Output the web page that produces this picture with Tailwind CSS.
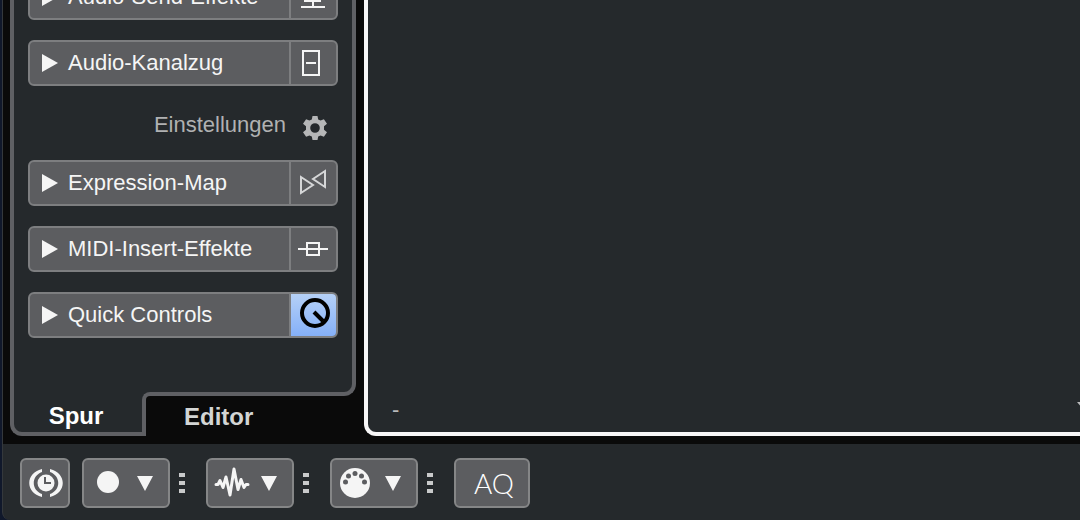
<!DOCTYPE html>
<html lang="de">
<head>
    <meta charset="UTF-8">
    <meta name="viewport" content="width=device-width, initial-scale=1.0">
    <title>Inspector</title>
    <script src="https://cdn.jsdelivr.net/npm/@tailwindcss/browser@4"></script>
</head>
<body class="h-screen overflow-hidden bg-[#10182b] pl-[2px] font-['Liberation_Sans',Arial,sans-serif] text-[#f5f5f5]">
    <div class="h-full flex flex-col overflow-hidden rounded-bl-lg border-l border-[#34383c] bg-[#25292c]">
        <main class="flex-1 min-h-0 flex gap-2 pl-[7px] pb-2 bg-[#0a0a0a]">
            <!-- Inspector -->
            <aside class="w-[346px] shrink-0 flex flex-col">
                <div class="flex-1 min-h-0 overflow-hidden flex flex-col justify-end gap-5 px-[14px] pb-[54px] bg-[#25292c] border-x-4 border-b-4 border-[#5f6064] rounded-br-xl">
                    <section class="shrink-0 h-[46px] flex overflow-hidden rounded-md border-2 border-[#7d7e80] bg-[#5c5d60]">
                        <button class="flex-1 flex items-center gap-[10px] pl-3 text-left text-[22px] leading-6">
                            <svg class="w-4 h-[18px]" viewBox="0 0 16 18" fill="currentColor"><path d="M0 0L16 9L0 18Z"/></svg>
                            Audio-Send-Effekte
                        </button>
                        <button class="w-[47px] flex items-center justify-center pr-[2px] border-l-2 border-[#7d7e80]" aria-label="Audio-Sends">
                            <svg class="w-[30px] h-[30px]" viewBox="0 0 30 30" fill="none" stroke="currentColor" stroke-width="2"><path d="M7 8H22V19H7ZM15 19V25M3 25H27"/></svg>
                        </button>
                    </section>
                    <section class="shrink-0 h-[46px] flex overflow-hidden rounded-md border-2 border-[#7d7e80] bg-[#5c5d60]">
                        <button class="flex-1 flex items-center gap-[10px] pl-3 text-left text-[22px] leading-6">
                            <svg class="w-4 h-[18px]" viewBox="0 0 16 18" fill="currentColor"><path d="M0 0L16 9L0 18Z"/></svg>
                            Audio-Kanalzug
                        </button>
                        <button class="w-[47px] flex items-center justify-center pr-[2px] border-l-2 border-[#7d7e80]" aria-label="Kanalzug">
                            <svg class="w-[30px] h-[30px]" viewBox="0 0 30 30" fill="none" stroke="currentColor" stroke-width="2"><path d="M5 3H21V27H5ZM8 15H18"/></svg>
                        </button>
                    </section>
                    <div class="shrink-0 h-[34px] flex items-center justify-end gap-4 pr-[10px] text-[22px] leading-6 text-[#b0b1b2]">
                        <span id="settings" class="pt-1">Einstellungen</span>
                        <button class="pt-[10px]" aria-labelledby="settings">
                            <svg class="w-[26px] h-[26px]" viewBox="-13 -13 26 26" fill="#b5b6b7"><path fill-rule="evenodd" d="M-2.5 -12H2.5L3.2 -8.6L5.6 -7.4L8.9 -8.7L12 -4.2L9 -1.8V1.8L12 4.2L8.9 8.7L5.6 7.4L3.2 8.6L2.5 12H-2.5L-3.2 8.6L-5.6 7.4L-8.9 8.7L-12 4.2L-9 1.8V-1.8L-12 -4.2L-8.9 -8.7L-5.6 -7.4L-3.2 -8.6ZM0 -4.8A4.8 4.8 0 1 0 0 4.8A4.8 4.8 0 1 0 0 -4.8Z"/></svg>
                        </button>
                    </div>
                    <section class="shrink-0 h-[46px] flex overflow-hidden rounded-md border-2 border-[#7d7e80] bg-[#5c5d60]">
                        <button class="flex-1 flex items-center gap-[10px] pl-3 text-left text-[22px] leading-6">
                            <svg class="w-4 h-[18px]" viewBox="0 0 16 18" fill="currentColor"><path d="M0 0L16 9L0 18Z"/></svg>
                            Expression-Map
                        </button>
                        <button class="w-[47px] flex items-center justify-center pr-[2px] border-l-2 border-[#7d7e80]" aria-label="Expression-Map öffnen">
                            <svg class="w-[30px] h-[30px]" viewBox="0 0 30 30" fill="none" stroke="#d5d6d7" stroke-width="2"><path d="M3 9V25L15 17ZM27 3V19L15 11Z"/></svg>
                        </button>
                    </section>
                    <section class="shrink-0 h-[46px] flex overflow-hidden rounded-md border-2 border-[#7d7e80] bg-[#5c5d60]">
                        <button class="flex-1 flex items-center gap-[10px] pl-3 text-left text-[22px] leading-6">
                            <svg class="w-4 h-[18px]" viewBox="0 0 16 18" fill="currentColor"><path d="M0 0L16 9L0 18Z"/></svg>
                            MIDI-Insert-Effekte
                        </button>
                        <button class="w-[47px] flex items-center justify-center pr-[2px] border-l-2 border-[#7d7e80]" aria-label="MIDI-Inserts">
                            <svg class="w-[30px] h-[30px]" viewBox="0 0 30 30" fill="none" stroke="currentColor" stroke-width="2"><path d="M9 9H21V21H9ZM0 15H30"/></svg>
                        </button>
                    </section>
                    <section class="shrink-0 h-[46px] flex overflow-hidden rounded-md border-2 border-[#7d7e80] bg-[#5c5d60]">
                        <button class="flex-1 flex items-center gap-[10px] pl-3 text-left text-[22px] leading-6">
                            <svg class="w-4 h-[18px]" viewBox="0 0 16 18" fill="currentColor"><path d="M0 0L16 9L0 18Z"/></svg>
                            Quick Controls
                        </button>
                        <button class="w-[47px] flex items-center justify-center border-l-2 border-[#7d7e80] bg-linear-to-b from-[#b5d0f6] to-[#85b0f8] text-black" aria-label="Quick Controls öffnen">
                            <svg class="w-[34px] h-[34px]" viewBox="-2 -2 34 34" fill="none" stroke="currentColor" stroke-width="4"><circle cx="16" cy="13" r="13"/><path d="M15 12L24 21"/></svg>
                        </button>
                    </section>
                </div>
                <nav class="relative -mt-1 h-11 shrink-0 flex text-2xl leading-6 font-bold">
                    <button class="w-[132px] pt-2 pr-1 bg-[#25292c] border-l-4 border-b-4 border-[#5f6064] rounded-bl-xl text-white">Spur</button>
                    <button class="w-[180px] bg-[#25292c] text-[#d3d5d4]">
                        <span class="flex items-center h-full pl-[38px] pt-[2px] border-t-4 border-l-4 border-[#5f6064] rounded-tl-lg bg-[#0a0a0a]">Editor</span>
                    </button>
                </nav>
            </aside>

            <!-- Empty editor area -->
            <section class="flex-1 min-w-0 overflow-hidden flex items-end justify-between pl-6 pb-[10px] border-l-4 border-b-4 border-[#f7f6f7] rounded-bl-xl bg-[#25292c] text-[22px] leading-6 text-[#b9babb]">
                <span>-</span>
                <svg class="w-3 h-6 -mr-[9px]" viewBox="0 0 12 24" fill="currentColor"><path d="M0 4H12L6 11Z"/></svg>
            </section>
        </main>

        <!-- Toolbar -->
        <footer class="flex items-center gap-3 pl-[17px] pt-[14px] pb-3">
            <button class="w-[50px] h-[50px] flex items-center justify-center rounded-md border-2 border-[#858687] bg-[#5c5d60]" aria-label="Retrospektive Aufnahme">
                <svg class="w-9 h-[30px] shrink-0" viewBox="0 0 36 30" fill="none">
                    <circle cx="19" cy="15" r="8.5" fill="#f5f5f5"/>
                    <path d="M18 9V15H24" stroke="#5c5d60" stroke-width="2"/>
                    <path d="M15 1C-2 5 -2 25 15 29V26C4 22 4 8 15 4ZM23 1C40 5 40 25 23 29V26C34 22 34 8 23 4Z" fill="#f5f5f5"/>
                </svg>
            </button>
            <button class="w-[88px] h-[50px] flex items-center justify-between pl-[13px] pr-[15px] rounded-md border-2 border-[#858687] bg-[#5c5d60]" aria-label="Aufnahme">
                <svg class="w-[22px] h-[22px] -mt-[2px]" viewBox="0 0 22 22" fill="currentColor"><circle cx="11" cy="11" r="11"/></svg>
                <svg class="w-4 h-[15px]" viewBox="0 0 16 15" fill="currentColor"><path d="M0 0H16L8 15Z"/></svg>
            </button>
            <svg class="w-6 h-5 -mx-[6px]" viewBox="0 0 24 20" fill="#c9cacb"><path d="M3 0H9V4H3ZM3 8H9V12H3ZM3 16H9V20H3Z"/></svg>
            <button class="w-[88px] h-[50px] flex items-center justify-between pl-[6px] pr-[15px] rounded-md border-2 border-[#858687] bg-[#5c5d60]" aria-label="Audio">
                <svg class="w-9 h-8" viewBox="0 0 36 32" fill="none" stroke="currentColor" stroke-width="3" stroke-linejoin="round" stroke-linecap="round"><path d="M2 17.5H4L6 13.5L9 20.500L12 10L16 28L20 2L24 22.500L27 12.500L30 20.500L32 17.500H34"/></svg>
                <svg class="w-4 h-[15px]" viewBox="0 0 16 15" fill="currentColor"><path d="M0 0H16L8 15Z"/></svg>
            </button>
            <svg class="w-6 h-5 -mx-[6px]" viewBox="0 0 24 20" fill="#c9cacb"><path d="M3 0H9V4H3ZM3 8H9V12H3ZM3 16H9V20H3Z"/></svg>
            <button class="w-[88px] h-[50px] flex items-center justify-between pl-2 pr-[15px] rounded-md border-2 border-[#858687] bg-[#5c5d60]" aria-label="MIDI">
                <svg class="w-[30px] h-[30px]" viewBox="0 0 30 30" fill="currentColor">
                    <circle cx="15" cy="15" r="15"/>
                    <g fill="#5c5d60"><circle cx="5.500" cy="14" r="2.500"/><circle cx="8.500" cy="8" r="2.500"/><circle cx="15" cy="5.500" r="2.500"/><circle cx="21.500" cy="8" r="2.500"/><circle cx="24.500" cy="14" r="2.500"/></g>
                </svg>
                <svg class="w-4 h-[15px]" viewBox="0 0 16 15" fill="currentColor"><path d="M0 0H16L8 15Z"/></svg>
            </button>
            <svg class="w-6 h-5 -mx-[6px]" viewBox="0 0 24 20" fill="#c9cacb"><path d="M3 0H9V4H3ZM3 8H9V12H3ZM3 16H9V20H3Z"/></svg>
            <button class="w-[76px] h-[50px] pl-1 rounded-md border-2 border-[#858687] bg-[#5c5d60] font-[Lato,sans-serif] font-light text-[28px] leading-8 text-white">AQ</button>
        </footer>
    </div>
</body>
</html>
